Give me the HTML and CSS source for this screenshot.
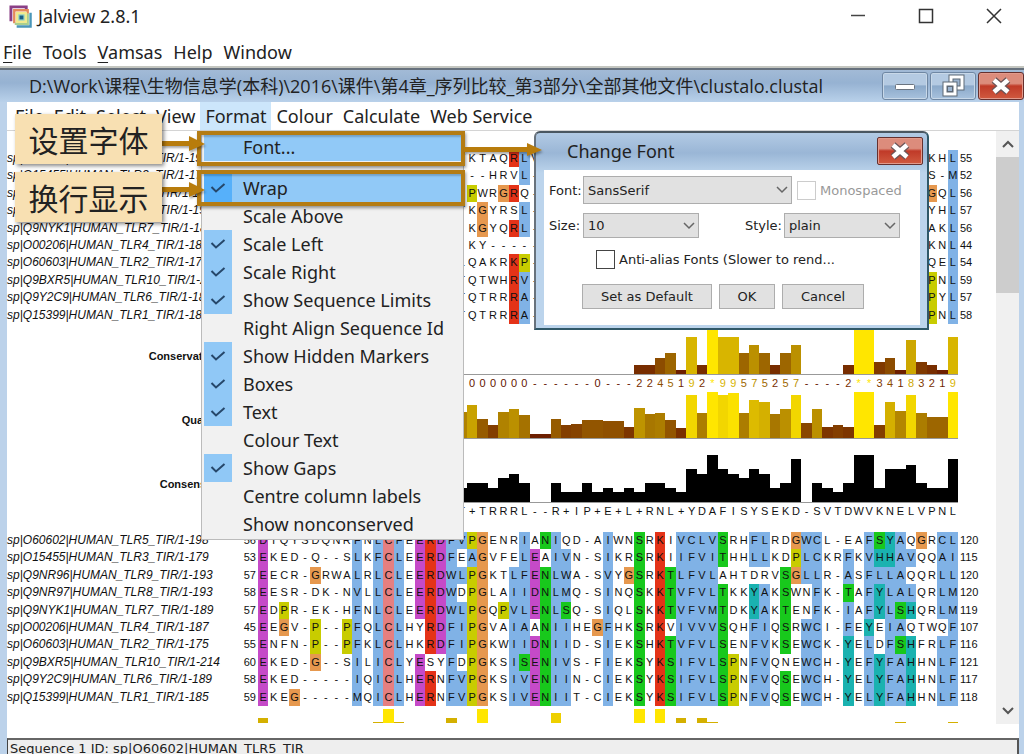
FILE: index.html
```html
<!DOCTYPE html>
<html lang="zh-CN">
<head>
<meta charset="utf-8">
<title>Jalview 2.8.1</title>
<link rel="stylesheet" href="styles.css">
</head>
<body>
<div class="app">
  <header class="app-title">
    <svg class="logo" viewBox="0 0 24 24" width="23" height="23">
      <path d="M2 17V2H18V6" fill="none" stroke="#8a3f86" stroke-width="3"/>
      <path d="M5.500 19V5.500H19.500V9" fill="none" stroke="#e58a5a" stroke-width="2.500"/>
      <path d="M22.500 8V22.500H8" fill="none" stroke="#4a96b8" stroke-width="2.500"/>
      <path d="M19.500 9V19.500H6" fill="none" stroke="#a9cf8f" stroke-width="2.500"/>
      <rect x="8.500" y="8.500" width="9" height="9" fill="#8ccfc8" stroke="#f0ea8e" stroke-width="2.500"/>
      <rect x="11" y="11" width="4" height="4" fill="#1c5f86"/>
    </svg>
    <h1 class="app-name">Jalview 2.8.1</h1>
    <div class="window-buttons">
      <button class="window-button" aria-label="Minimize"><svg width="16" height="16" viewBox="0 0 16 16"><path d="M1 7.500H15" stroke="#444" stroke-width="1.500"/></svg></button>
      <button class="window-button" aria-label="Maximize"><svg width="16" height="16" viewBox="0 0 16 16"><rect x="1.500" y="1.500" width="13" height="13" fill="none" stroke="#333" stroke-width="1.500"/></svg></button>
      <button class="window-button" aria-label="Close"><svg width="16" height="16" viewBox="0 0 16 16"><path d="M1 1L15 15M15 1L1 15" stroke="#333" stroke-width="1.500"/></svg></button>
    </div>
  </header>
  <nav class="app-menu">
    <button class="app-menu-item"><u>F</u>ile</button>
    <button class="app-menu-item">Tools</button>
    <button class="app-menu-item"><u>V</u>amsas</button>
    <button class="app-menu-item">Help</button>
    <button class="app-menu-item">Window</button>
  </nav>

  <section class="frame">
    <header class="frame-title">
      <h2 class="frame-name">D:\Work\课程\生物信息学(本科)\2016\课件\第4章_序列比较_第3部分\全部其他文件\clustalo.clustal</h2>
      <div class="frame-buttons">
        <button class="frame-button" aria-label="Minimize frame"><svg width="22" height="22" viewBox="0 0 22 22"><rect x="1.500" y="9.500" width="19" height="5" rx="1" fill="#fff" stroke="#6b7480"/></svg></button>
        <button class="frame-button" aria-label="Restore frame"><svg width="26" height="24" viewBox="0 0 26 24"><rect x="11" y="3" width="11" height="11" fill="#9bb4d0" stroke="#5d6875" stroke-width="5"/><rect x="11" y="3" width="11" height="11" fill="none" stroke="#fff" stroke-width="3"/><rect x="5" y="10" width="10" height="10" fill="#9bb4d0" stroke="#5d6875" stroke-width="5"/><rect x="5" y="10" width="10" height="10" fill="none" stroke="#fff" stroke-width="3"/><rect x="7.500" y="12.500" width="5" height="5" fill="none" stroke="#5d6875"/></svg></button>
        <button class="frame-button close-red" aria-label="Close frame"><svg width="22" height="18" viewBox="0 0 22 18"><path d="M4 3L18 15M18 3L4 15" stroke="#6b5558" stroke-width="7"/><path d="M4 3L18 15M18 3L4 15" stroke="#fff" stroke-width="4.500"/></svg></button>
      </div>
    </header>

    <div class="frame-body">
      <nav class="frame-menu">
        <button class="frame-menu-item">File</button>
        <button class="frame-menu-item">Edit</button>
        <button class="frame-menu-item">Select</button>
        <button class="frame-menu-item">View</button>
        <button class="frame-menu-item open">Format</button>
        <button class="frame-menu-item">Colour</button>
        <button class="frame-menu-item">Calculate</button>
        <button class="frame-menu-item">Web Service</button>
      </nav>
      <div class="viewport">
        <main class="alignment" id="alignment"></main>
        <div class="scrollbar">
          <button class="scroll-arrow" aria-label="Scroll up"><svg width="12" height="8" viewBox="0 0 12 8"><path d="M1 7L6 2L11 7" fill="none" stroke="#555" stroke-width="2"/></svg></button>
          <div class="scroll-thumb"></div>
          <button class="scroll-arrow bottom" aria-label="Scroll down"><svg width="12" height="8" viewBox="0 0 12 8"><path d="M1 1L6 6L11 1" fill="none" stroke="#555" stroke-width="2"/></svg></button>
        </div>
      </div>
      <footer class="status">Sequence 1 ID: sp|O60602|HUMAN_TLR5_TIR</footer>
    </div>
  </section>

  <div class="dropdown" id="format-menu"></div>

  <section class="dialog" role="dialog" aria-labelledby="dialog-name">
    <header class="dialog-title">
      <h2 class="dialog-name" id="dialog-name">Change Font</h2>
      <button class="dialog-close close-red" aria-label="Close dialog"><svg width="22" height="18" viewBox="0 0 22 18"><path d="M4 3L18 15M18 3L4 15" stroke="#6b5558" stroke-width="7"/><path d="M4 3L18 15M18 3L4 15" stroke="#fff" stroke-width="4.500"/></svg></button>
    </header>
    <form class="dialog-body">
      <div class="field-row first">
        <label class="field-label" for="font">Font:</label>
        <span class="picker wide"><select class="select" id="font"><option>SansSerif</option></select><svg class="chevron" width="12" height="8" viewBox="0 0 12 8"><path d="M1 1L6 6L11 1" fill="none" stroke="#666" stroke-width="1.500"/></svg></span>
        <input class="check faint" type="checkbox" id="mono" disabled>
        <label class="disabled" for="mono">Monospaced</label>
      </div>
      <div class="field-row second">
        <label class="field-label" for="size">Size:</label>
        <span class="picker narrow"><select class="select" id="size"><option>10</option></select><svg class="chevron" width="12" height="8" viewBox="0 0 12 8"><path d="M1 1L6 6L11 1" fill="none" stroke="#666" stroke-width="1.500"/></svg></span>
        <label class="style-label" for="style">Style:</label>
        <span class="picker narrow"><select class="select" id="style"><option>plain</option></select><svg class="chevron" width="12" height="8" viewBox="0 0 12 8"><path d="M1 1L6 6L11 1" fill="none" stroke="#666" stroke-width="1.500"/></svg></span>
      </div>
      <div class="field-row third">
        <input class="check" type="checkbox" id="smooth">
        <label for="smooth">Anti-alias Fonts (Slower to rend...</label>
      </div>
      <div class="actions">
        <button class="action default" type="button">Set as Default</button>
        <button class="action ok" type="button">OK</button>
        <button class="action cancel" type="button">Cancel</button>
      </div>
    </form>
  </section>

  <div class="highlight font-box"></div>
  <div class="highlight wrap-box"></div>
  <svg class="arrow to-font" width="44" height="18" viewBox="0 0 44 18"><path d="M0 6H27V1L43 9L27 16V11H0Z" fill="#b87c0c"/></svg>
  <svg class="arrow to-wrap" width="44" height="18" viewBox="0 0 44 18"><path d="M0 6H27V1L43 9L27 16V11H0Z" fill="#b87c0c"/></svg>
  <svg class="arrow to-dialog" width="80" height="18" viewBox="0 0 80 18"><path d="M0 6H63V2L78 9L63 15V11H0Z" fill="#b87c0c"/></svg>
  <p class="note note-font">设置字体</p>
  <p class="note note-wrap">换行显示</p>
</div>
<script src="alignment.js"></script>
</body>
</html>
```
FILE: styles.css
```css
* { box-sizing: border-box; }

body {
  margin: 0;
  height: 100vh;
  overflow: hidden;
  background: #fff;
  color: #222;
  font-family: "Noto Sans", "Noto Sans CJK SC", sans-serif;
}

h1, h2, p { margin: 0; font-weight: 400; }
button, select, input { margin: 0; padding: 0; font: inherit; color: inherit; }

.app {
  position: relative;
  display: flex;
  flex-direction: column;
  min-height: calc(100vh + 8px);
}

/* application window */
.app-title {
  display: flex;
  align-items: center;
  height: 35px;
  padding: 0 22px 3px 9px;
}
.app-name { flex: 1; padding-left: 6px; font-size: 18px; }
.window-buttons { display: flex; gap: 52px; }
.window-button {
  display: grid;
  place-items: center;
  width: 16px;
  height: 16px;
  border: 0;
  background: none;
}
.window-button svg { display: block; }
.app-menu {
  display: flex;
  gap: 11px;
  height: 33px;
  padding: 3px 0 0 3px;
  border-bottom: 2px solid #c4c6c0;
}
.app-menu-item { border: 0; background: none; font-size: 18px; }
.app-menu-item u { text-decoration-thickness: 1px; text-underline-offset: 3px; }

/* internal frame */
.frame {
  flex: 1;
  display: flex;
  flex-direction: column;
  border-top: 2px solid #66707c;
  background: #bcd2ea;
}
.frame-title {
  display: flex;
  align-items: center;
  height: 32px;
  padding-left: 29px;
  background: linear-gradient(#a2bad6, #96b2d2 40%, #b9d1ea);
}
.frame-name {
  flex: 1;
  font-family: "Open Sans", "Noto Sans CJK SC", sans-serif;
  font-size: 18px;
  line-height: 30px;
  white-space: nowrap;
}
.frame-buttons { display: flex; gap: 2px; }
.frame-button {
  display: grid;
  place-items: center;
  width: 46px;
  height: 28px;
  border: 1px solid #6f87a3;
  border-radius: 3px;
  box-shadow: inset 0 0 0 1px #c8d8e8;
  background: linear-gradient(#b4cae2 45%, #8ba9ca 50%, #a8c2dd);
}
.frame-button svg { display: block; }
.close-red {
  border-color: #66302e;
  box-shadow: inset 0 0 0 1px #e29a8c;
  background: linear-gradient(#dc8c7c 40%, #c03a28 50%, #d05a40);
}
.frame-body {
  flex: 1;
  display: flex;
  flex-direction: column;
  margin: 0 5px 0 7px;
  background: #fff;
}
.frame-menu {
  display: flex;
  height: 29px;
  padding-left: 3px;
  border-bottom: 1px solid #d4d4d4;
}
.frame-menu-item {
  height: 28px;
  padding: 0 5px;
  border: 0;
  background: none;
  font-size: 18px;
}
.frame-menu-item.open { background: #cce6fb; }
.viewport { flex: 1; display: flex; }

.scrollbar {
  display: flex;
  flex-direction: column;
  width: 23px;
  margin-bottom: 14px;
  background: #f0f0f0;
}
.scroll-arrow {
  display: grid;
  place-items: center;
  height: 26px;
  border: 0;
  background: none;
}
.scroll-arrow.bottom { margin-top: auto; }
.scroll-thumb { height: 136px; background: #cdcdcd; }

.status {
  height: 24px;
  padding-left: 2px;
  border-top: 2px solid #666;
  border-left: 1px solid #444;
  border-right: 2px solid #555;
  background: #eee;
  font-family: "DejaVu Sans", sans-serif;
  font-size: 13px;
  line-height: 18px;
}

/* sequences */
.alignment {
  flex: 1;
  padding: 19px 0 15px;
  font-family: "Liberation Sans", sans-serif;
  font-size: 11px;
  line-height: 17px;
  color: #111;
}
.block {
  display: grid;
  grid-template-rows: repeat(10, minmax(0, 1fr));
  height: 174px;
}
.line {
  display: grid;
  grid-template-columns: 227px 20px minmax(0, 1fr) 38px;
  column-gap: 2px;
  align-items: stretch;
}
.line > .residues { margin: 0 -2px 0 0; }
.seq-id { font-size: 12px; font-style: italic; white-space: nowrap; }
.number-left { text-align: right; }
.number-right { padding-left: 2px; }
.residues {
  display: grid;
  grid-template-columns: repeat(67, minmax(0, 1fr));
}
.cell { text-align: center; }
.cell.b { background: #80b2e6; }
.cell.m { background: #c54ac8; }
.cell.r { background: #e43318; }
.cell.g { background: #18c81c; }
.cell.o { background: #e6984e; }
.cell.y { background: #c8cc00; }
.cell.c { background: #1ab2b0; }
.cell.p { background: #e67f80; }
.track-label {
  align-self: end;
  width: 212px;
  padding-bottom: 10px;
  font-weight: 700;
  text-align: right;
}
.chart { align-items: end; border-bottom: 1px solid #999; }
.chart.plain { border: 0; }
.chart-conservation { height: 51px; }
.chart-quality { height: 47px; }
.chart-consensus { height: 64px; }
.chart-next { height: 17px; }
.labels { height: 17px; }
.labels.consensus { height: 29px; }

/* Format menu */
.dropdown {
  position: absolute;
  left: 201px;
  top: 131px;
  width: 263px;
  padding: 1px 2px;
  border: 1px solid #bbb;
  background: #f1f1f1;
}
.menu-item {
  display: flex;
  align-items: stretch;
  width: 100%;
  height: 28px;
  border: 0;
  background: none;
  font-size: 18px;
  text-align: left;
}
.menu-item .mark {
  display: grid;
  place-items: center;
  width: 28px;
  margin-right: 11px;
}
.menu-item .text { align-self: center; }
.menu-item.checked .mark { background: #90c8f6; }
.menu-item.active { background: #91c9f7; }
.menu-item.active.checked .mark { background: #56b0fa; }
.menu-separator { height: 13px; }

/* font dialog */
.dialog {
  position: absolute;
  left: 534px;
  top: 131px;
  width: 395px;
  padding: 0 7px 3px 8px;
  border: 2px solid #305868;
  border-top-color: #4a5660;
  border-left-color: #68727c;
  border-radius: 6px 6px 0 0;
  background: linear-gradient(#b2cae4, #9ab6d6 20px, #bcd4ec 40px);
  font-family: "DejaVu Sans", sans-serif;
  font-size: 13px;
}
.dialog-title {
  display: flex;
  justify-content: space-between;
  align-items: center;
  height: 37px;
  padding: 0 0 2px 23px;
  margin-right: -3px;
}
.dialog-name { font-family: "Noto Sans", sans-serif; font-size: 18px; }
.dialog-close {
  display: grid;
  place-items: center;
  width: 46px;
  height: 28px;
  border-style: solid;
  border-width: 1px;
  border-radius: 2px;
}
.dialog-body { height: 155px; padding: 6px 6px 0 5px; background: #fff; }
.field-row { display: flex; align-items: center; white-space: nowrap; }
.field-label { width: 34px; }
.first { height: 28px; }
.second { height: 25px; margin-top: 9px; }
.third { height: 20px; margin: 11px 0 0 47px; }
.picker { position: relative; display: block; }
.wide { width: 209px; height: 28px; margin-right: 5px; }
.narrow { width: 116px; height: 25px; }
.select {
  width: 100%;
  height: 100%;
  padding-left: 4px;
  border: 1px solid #adadad;
  border-radius: 0;
  background: #e1e1e1;
  appearance: none;
}
.chevron { position: absolute; right: 4px; top: 50%; margin-top: -4px; }
.check {
  flex: none;
  width: 19px;
  height: 19px;
  margin-right: 4px;
  border: 1px solid #444;
  background: #fff;
  appearance: none;
}
.check.faint { border-color: #ccc; }
.disabled { color: #999; }
.style-label { margin-left: auto; padding-right: 2px; }
.second .narrow:last-child { margin-right: 14px; }
.actions { display: flex; gap: 7px; margin: 15px 0 0 33px; }
.action { height: 25px; border: 1px solid #adadad; background: #e1e1e1; }
.default { width: 130px; }
.ok { width: 56px; }
.cancel { width: 82px; }

/* call-outs over the window */
.highlight {
  position: absolute;
  left: 197px;
  width: 268px;
  border: 4px solid #b47c14;
  box-shadow: 1px 2px 3px #0006, inset 1px 2px 2px #0003;
}
.font-box { top: 131px; height: 35px; }
.wrap-box { top: 170px; height: 36px; }
.arrow { position: absolute; filter: drop-shadow(1px 2px 1px #0005); }
.to-font { left: 162px; top: 135px; }
.to-wrap { left: 162px; top: 181px; }
.to-dialog { left: 464px; top: 141px; }
.note {
  position: absolute;
  left: 15px;
  width: 147px;
  height: 50px;
  background: #f8e0b2;
  box-shadow: 2px 2px 4px #0007;
  font-family: "Noto Sans CJK SC", sans-serif;
  font-size: 30px;
  line-height: 50px;
  text-align: center;
  white-space: nowrap;
}
.note-font { top: 114px; }
.note-wrap { top: 172px; }
```
FILE: alignment.js
```js
const COLUMNS = 67;
const pack = (text) => text.replace(/ /g, "");

const upper = [
  ["YKTAQRLV", ".....rb.", "KHL", "..b", 55],
  ["---HRVL-", "......b.", "S-M", "..b", 52],
  ["-PWRGRQ-", ".y..or..", "GQL", "o.b", 56],
  ["TKGYRSL-", "..o...b.", "YHL", "..b", 57],
  ["-KGYQRL-", "..o..rb.", "AKL", "..b", 56],
  ["-KY-----", "........", "KNL", "..b", 44],
  ["LQAKRKP-", ".....ry.", "QEL", "..b", 54],
  ["TQTWHRV-", ".....rb.", "PNL", "y.b", 59],
  ["TQTRRRA-", ".....rb.", "PYL", "y.b", 57],
  ["TQTRRRA-", ".....rb.", "PNL", "y.b", 58]
];

const lower = [
  ["sp|O60602|HUMAN_TLR5_TIR/1-198", 56, "DTQYSDQNRF NLCFEERDFV PGENRIANIQ D-AIWNSRKI VCLVSRHFLR DGWCL-EAFS YAQGRCL",
    "m........b .bpb.mrmbb yo...b.gb. ...b..g.r. bbbbg..bb. .obb....bg cb.o.bb", 120],
  ["sp|O15455|HUMAN_TLR3_TIR/1-179", 53, "EKED-Q--SL KFCLEERDFE AGVFELEAIV N-SIKRSRKI IFVITHHLLK DPLCKRFKVH HAVQQAI",
    "m........b .bpb.mrmb. bo...bm.bb ...b..g.r. bbbbg..bb. .ybb..b.bc cbb..bb", 115],
  ["sp|Q9NR96|HUMAN_TLR9_TIR/1-193", 57, "EECR-GRWAL RLCLEERDWL PGKTLFENLW A-SVYGSRKT LFVLAHTDRV SGLLR-ASFL LAQQRLL",
    "m....o...b .bpb.mrmbb yo..bbmgbb ...b.og.rg bbbb...... gobb..b.bb bb...bb", 120],
  ["sp|Q9NR97|HUMAN_TLR8_TIR/1-193", 58, "EESR-DK-NV LLCLEERDWD PGLAIIDNLM Q-SINQSKKT VFVLTKKYAK SWNFK-TAFY LALQRLM",
    "m........b .bpb.mrmb. yo..bbmgbb ...b..g.rg bbbbg..cb. g..b..g.bc bbb..bb", 120],
  ["sp|Q9NYK1|HUMAN_TLR7_TIR/1-189", 57, "EDPR-EK-HF NLCLEERDWL PGQPVLENLS Q-SIQLSKKT VFVMTDKYAK TENFK-IAFY LSHQRLM",
    "m.y......b .bpb.mrmbb yo.ybbmgbg ...b..g.rg bbbbg..cb. g..b..b.bc bgc..bb", 119],
  ["sp|O00206|HUMAN_TLR4_TIR/1-187", 45, "EEGV-P--PF QLCLHYRDFI PGVAIAANII HEGFHKSRKV IVVVSQHFIQ SRWCI-FEYE IAQTWQF",
    "m.o..y..yb .bpb..rmbb yo..bb.gbb ..ob..g.r. bbbbg..bb. g.bb..b.c. bb....b", 107],
  ["sp|O60603|HUMAN_TLR2_TIR/1-175", 55, "ENFN-P--PF KLCLHKRDFI PGKWIIDNII D-SIEKSHKT VFVLSENFVK SEWCK-YELD FSHFRLF",
    "m....y..yb .bpb..rmbb yo..bbmgbb ...b..g.rg bbbbg..bb. g.bb..c.b. bgc..bb", 116],
  ["sp|Q9BXR5|HUMAN_TLR10_TIR/1-214", 60, "EKED-G--SI LICLYESYFD PGKSISENIV S-FIEKSYKS IFVLSPNFVQ NEWCH-YEFY FAHHNLF",
    "m....o...b .bpb.m..b. yo..bgmgbb ...b..g.rg bbbbgy.bb. ..bb..c.bc bbc..bb", 121],
  ["sp|Q9Y2C9|HUMAN_TLR6_TIR/1-189", 58, "EKED-----I QICLHERNFV PGKSIVENII N-CIEKSYKS IFVLSPNFVQ SEWCH-YELY FAHHNLF",
    "m........b .bpb.mr.bb yo..bbmgbb ...b..g.rg bbbbgy.bb. g.bb..c.bc bbc..bb", 117],
  ["sp|Q15399|HUMAN_TLR1_TIR/1-185", 59, "EKEG-----M QICLHERNFV PGKSIVENII T-CIEKSYKS IFVLSPNFVQ SEWCH-YELY FAHHNLF",
    "m..o.....b .bpb.mr.bb yo..bbmgbb ...b..g.rg bbbbgy.bb. g.bb..c.bc bbc..bb", 118]
];

const digits = " ".repeat(20) + "000000------0---2245192*99575257----2**34183219";
const consensus = " ".repeat(19) + "T+TRRRL--R+IP+E+L+RNL+YDAFISYSEKD-SVTDWVKNELVPNL";

const digitHeights = { 1: 4, 2: 9, 3: 12, 4: 16, 5: 21, 7: 29, 8: 34, 9: 37, "*": 46 };
const conservationBars = [...digits].map((d) => digitHeights[d] || 0);
const qualityBars = Array(19).fill(0).concat([
  26, 33, 19, 13, 26, 29, 23, 4, 4, 19, 13, 14, 18, 18, 17, 17, 11, 30, 24, 25, 18, 10, 43, 25,
  46, 43, 45, 25, 38, 36, 24, 29, 43, 15, 29, 11, 13, 11, 46, 46, 13, 36, 27, 43, 25, 21, 21, 46
]);
const consensusBars = Array(19).fill(0).concat([
  14, 19, 19, 14, 24, 28, 19, 0, 0, 19, 10, 10, 19, 10, 14, 10, 14, 10, 19, 19, 14, 10, 33, 28,
  47, 33, 28, 24, 33, 28, 14, 19, 43, 0, 19, 14, 10, 19, 47, 47, 14, 33, 33, 37, 19, 14, 14, 43
]);
const nextBars = Array(COLUMNS).fill(0);
Object.entries({ 0: 5, 11: 1, 12: 14, 13: 1, 18: 5, 21: 14, 28: 10, 36: 14, 38: 14, 40: 5, 42: 5, 43: 1, 61: 1, 66: 1 })
  .forEach(([column, height]) => { nextBars[column] = height; });

function shade(height) {
  const stops = [[0, 100, 20, 0], [10, 122, 48, 0], [18, 146, 85, 0], [25, 172, 125, 0], [36, 212, 176, 0], [46, 255, 230, 0]];
  for (let i = 1; i < stops.length; i++) {
    if (height <= stops[i][0]) {
      const a = stops[i - 1], b = stops[i];
      const t = (height - a[0]) / (b[0] - a[0]);
      return `rgb(${[1, 2, 3].map((k) => Math.round(a[k] + (b[k] - a[k]) * t)).join(",")})`;
    }
  }
  return "#ffe600";
}

function residues(text, colours) {
  return `<div class="residues">${[...text].map((letter, i) => {
    const tint = colours[i] === "." ? "" : ` ${colours[i]}`;
    return `<span class="cell${tint}">${letter === " " ? "" : letter}</span>`;
  }).join("")}</div>`;
}

function line(id, left, middle, right) {
  return `<div class="line"><span class="seq-id">${id}</span><span class="number-left">${left}</span>${middle}<span class="number-right">${right}</span></div>`;
}

function chart(label, name, values, colour) {
  const bars = values.map((v) => `<i style="height:${v}px;background:${colour(v)}"></i>`).join("");
  return `<div class="line"><span class="track-label">${label}</span><span></span><div class="residues chart chart-${name}">${bars}</div></div>`;
}

function labels(text, kind, colour) {
  const cells = [...text].map((c, i) => `<span class="cell" style="color:${colour(i)}">${c === " " ? "" : c}</span>`).join("");
  return `<div class="line labels ${kind}"><span></span><span></span><div class="residues">${cells}</div></div>`;
}

const top10 = upper.map(([a, aTint, b, bTint, end], i) => {
  const text = " ".repeat(19) + a + " ".repeat(37) + b;
  const tint = ".".repeat(19) + aTint + ".".repeat(37) + bTint;
  return line(lower[i][0], "", residues(text, tint), end);
}).join("");
const bottom10 = lower.map(([id, start, text, tint, end]) => line(id, start, residues(pack(text), pack(tint)), end)).join("");

document.getElementById("alignment").innerHTML =
  `<div class="block">${top10}</div>` +
  chart("Conservation", "conservation", conservationBars, shade) +
  labels(digits, "digits", (i) => shade(conservationBars[i])) +
  chart("Quality", "quality", qualityBars, shade) +
  chart("Consensus", "consensus", consensusBars, () => "#000") +
  labels(consensus, "consensus", () => "#111") +
  `<div class="block">${bottom10}</div>` +
  chart("", "next plain", nextBars, (v) => shade(v === 14 ? 46 : v === 10 ? 42 : 36));

const tick = '<svg width="16" height="14" viewBox="0 0 16 14"><path d="M1.500 6L6 10.500L14.500 3" fill="none" stroke="#26476a" stroke-width="2"/></svg>';
document.getElementById("format-menu").innerHTML = [
  ["Font...", "active"], null, ["Wrap", "active checked"], ["Scale Above", ""], ["Scale Left", "checked"],
  ["Scale Right", "checked"], ["Show Sequence Limits", "checked"], ["Right Align Sequence Id", ""],
  ["Show Hidden Markers", "checked"], ["Boxes", "checked"], ["Text", "checked"], ["Colour Text", ""],
  ["Show Gaps", "checked"], ["Centre column labels", ""], ["Show nonconserved", ""]
].map((item) => item
  ? `<button class="menu-item ${item[1]}"><span class="mark">${item[1].includes("checked") ? tick : ""}</span><span class="text">${item[0]}</span></button>`
  : '<div class="menu-separator"></div>').join("");
```
